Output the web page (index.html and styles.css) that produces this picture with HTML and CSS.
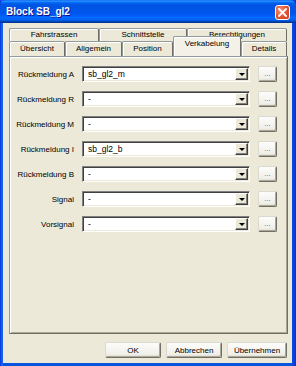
FILE: index.html
```html
<!DOCTYPE html>
<html lang="de">
<head>
    <meta charset="UTF-8">
    <title>Block SB_gl2</title>
    <link rel="stylesheet" href="styles.css">
</head>
<body>
    <div class="window">
        <div class="titlebar">
            <span class="title">Block SB_gl2</span>
            <button class="close-btn" title="Schließen">
                <svg width="9" height="9" viewBox="0 0 9 9"><path d="M1 1L8 8M8 1L1 8" stroke="#fff" stroke-width="1.8" stroke-linecap="square"/></svg>
            </button>
        </div>
        <div class="client">
            <div class="tabs">
                <div class="tab-row back">
                    <div class="tab w-fahr">Fahrstrassen</div>
                    <div class="tab w-schn">Schnittstelle</div>
                    <div class="tab w-bere">Berechtigungen</div>
                </div>
                <div class="tab-row front">
                    <div class="tab w-uebe">Übersicht</div>
                    <div class="tab w-allg">Allgemein</div>
                    <div class="tab w-posi">Position</div>
                    <div class="tab w-verk active">Verkabelung</div>
                    <div class="tab w-deta">Details</div>
                </div>
            </div>
            <div class="panel">
                <div class="field">
                    <label>Rückmeldung A</label>
                    <div class="combo"><span class="value">sb_gl2_m</span><span class="drop"><i></i></span></div>
                    <button class="more">...</button>
                </div>
                <div class="field">
                    <label>Rückmeldung R</label>
                    <div class="combo"><span class="value">-</span><span class="drop"><i></i></span></div>
                    <button class="more">...</button>
                </div>
                <div class="field">
                    <label>Rückmeldung M</label>
                    <div class="combo"><span class="value">-</span><span class="drop"><i></i></span></div>
                    <button class="more">...</button>
                </div>
                <div class="field">
                    <label>Rückmeldung I</label>
                    <div class="combo"><span class="value">sb_gl2_b</span><span class="drop"><i></i></span></div>
                    <button class="more">...</button>
                </div>
                <div class="field">
                    <label>Rückmeldung B</label>
                    <div class="combo"><span class="value">-</span><span class="drop"><i></i></span></div>
                    <button class="more">...</button>
                </div>
                <div class="field">
                    <label>Signal</label>
                    <div class="combo"><span class="value">-</span><span class="drop"><i></i></span></div>
                    <button class="more">...</button>
                </div>
                <div class="field">
                    <label>Vorsignal</label>
                    <div class="combo"><span class="value">-</span><span class="drop"><i></i></span></div>
                    <button class="more">...</button>
                </div>
            </div>
            <div class="buttons">
                <button class="btn">OK</button>
                <button class="btn">Abbrechen</button>
                <button class="btn">Übernehmen</button>
            </div>
        </div>
    </div>
</body>
</html>
```

FILE: styles.css
```css
:root {
    --face: #ece9d8;
    --shadow: #aca899;
    --dark: #716f64;
    --tab-border: #919b9c;
}
html, body {
    margin: 0;
    padding: 0;
    width: 296px;
    height: 366px;
    overflow: hidden;
    font-family: 'Liberation Sans', Arial, sans-serif;
    font-size: 8px;
    color: #000;
}
.window {
    width: 296px;
    height: 366px;
    box-sizing: border-box;
    display: flex;
    flex-direction: column;
    background: linear-gradient(90deg, #0831d9 0, #166aee 2px, #0855dd 4px, #0855dd 291px, #0831d9 296px);
}
.titlebar {
    height: 23px;
    flex: 0 0 23px;
    display: flex;
    align-items: center;
    justify-content: space-between;
    padding: 0 6px 0 6px;
    border-radius: 6px 6px 0 0;
    background: linear-gradient(#0058ee 0%, #3593ff 4%, #288eff 6%, #127dff 8%, #036ffc 10%, #0262ee 14%, #0057e5 20%, #0054e3 24%, #0055eb 56%, #005bf5 66%, #026afe 76%, #0062ef 86%, #0052d6 92%, #0040ab 94%, #003092 100%);
}
.title {
    color: #fff;
    font-weight: bold;
    font-size: 10px;
    text-shadow: 1px 1px #0f1089;
}
.close-btn {
    width: 15px;
    height: 15px;
    padding: 0;
    margin-top: 2px;
    border: 1px solid #fff;
    border-radius: 3px;
    background: radial-gradient(circle at 35% 35%, #f39a7c 0%, #e0512f 55%, #c8401f 100%);
    display: flex;
    align-items: center;
    justify-content: center;
}
.client {
    flex: 1;
    margin: 0 4px 4px 3px;
    background: var(--face);
    padding: 5px 4px 5px 6px;
    display: flex;
    flex-direction: column;
}
.tabs {
    display: flex;
    flex-direction: column;
}
.tab-row {
    display: flex;
}
.tab {
    box-sizing: border-box;
    text-align: center;
    white-space: nowrap;
    background: var(--face);
    border: 1px solid var(--tab-border);
    border-bottom: none;
    border-right-color: #6f6d63;
    border-radius: 2px 2px 0 0;
    box-shadow: inset 1px 1px #fff;
}
.tab-row.back .tab {
    height: 13px;
    line-height: 12px;
}
.tab-row.front .tab {
    height: 15px;
    line-height: 14px;
}
.tab.active {
    height: 20px !important;
    margin-top: -5px;
    margin-bottom: -1px;
    line-height: 13px !important;
    background: #f3f1e8;
    position: relative;
    z-index: 1;
}
.w-fahr { width: 90px; }
.w-schn { width: 88px; }
.w-bere { width: 100px; }
.w-uebe { width: 56px; }
.w-allg { width: 57px; }
.w-posi { width: 51px; }
.w-verk { width: 68px; }
.w-deta { width: 46px; }
.panel {
    height: 278px;
    box-sizing: border-box;
    border: 1px solid var(--tab-border);
    border-right-color: #6f6d63;
    border-bottom-color: #6f6d63;
    box-shadow: inset 1px 1px #fff, inset -1px -1px var(--shadow);
    padding: 9px 0 0 0;
    display: flex;
    flex-direction: column;
    gap: 9px;
}
.field {
    display: grid;
    grid-template-columns: 64px 168px 19px;
    column-gap: 8px;
    align-items: center;
    height: 16px;
}
.field label {
    text-align: right;
    white-space: nowrap;
}
.combo {
    box-sizing: border-box;
    height: 16px;
    background: #fff;
    border: 1px solid;
    border-color: #808080 #fff #fff #808080;
    box-shadow: inset 1px 1px #404040, inset -1px -1px var(--face);
    display: flex;
    align-items: center;
    padding: 0 1px 0 5px;
}
.combo .value {
    flex: 1;
    font-size: 8.5px;
}
.drop {
    width: 13px;
    height: 12px;
    box-sizing: border-box;
    background: var(--face);
    border: 1px solid;
    border-color: #fff #404040 #404040 #fff;
    box-shadow: inset -1px -1px #808080;
    display: flex;
    align-items: center;
    justify-content: center;
}
.drop i {
    width: 0;
    height: 0;
    border-left: 3px solid transparent;
    border-right: 3px solid transparent;
    border-top: 3px solid #000;
}
.more, .btn {
    font-family: 'Liberation Sans', Arial, sans-serif;
    font-size: 8px;
    color: #000;
    padding: 0;
    box-sizing: border-box;
    background: linear-gradient(#fcfcfb, #f0efe9 80%, #dedacd);
    border: 1px solid;
    border-color: #dcdad0 #716f64 #716f64 #dcdad0;
    border-radius: 2px;
    box-shadow: inset -1px -1px #aca899;
}
.more {
    width: 19px;
    height: 16px;
    line-height: 10px;
    color: #6d6b60;
}
.buttons {
    display: flex;
    justify-content: flex-end;
    gap: 5px;
    margin-top: 8px;
    padding-right: 1px;
}
.btn {
    height: 16px;
    width: 56px;
}
.btn:last-child {
    width: 60px;
}
```
